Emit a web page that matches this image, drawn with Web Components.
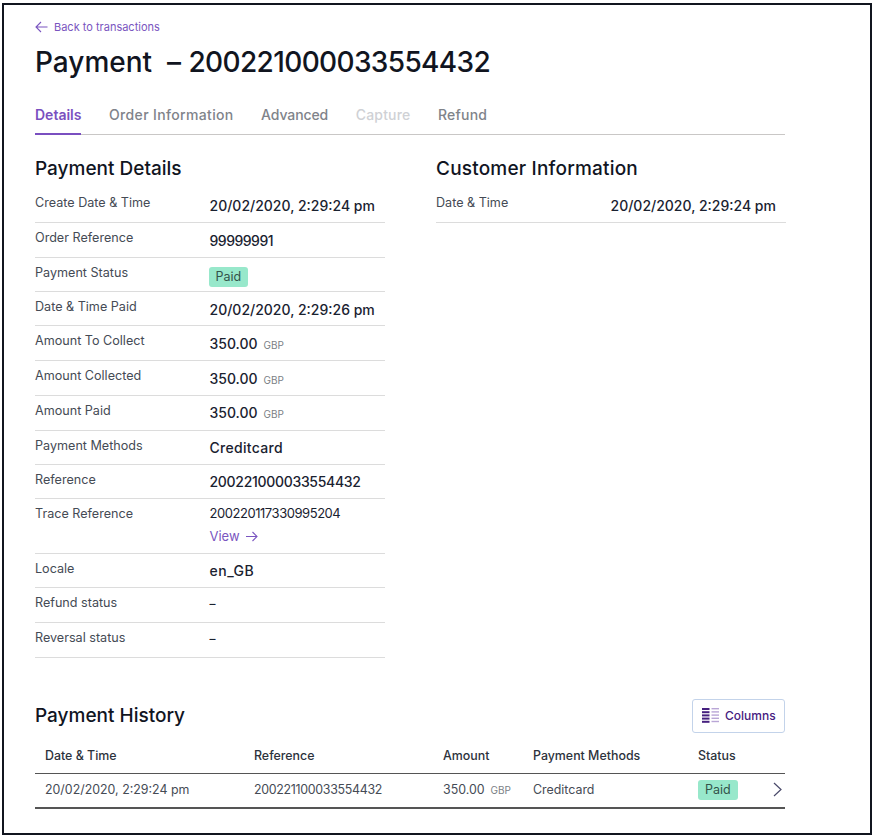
<!DOCTYPE html>
<html lang="en">
<head>
<meta charset="utf-8">
<title>Payment</title>
<style>
  html, body { margin: 0; background: #fff; }
  body { font-family: "Inter", "Liberation Sans", sans-serif; color: #1a2230; }
  .dash { font-size: 12px; line-height: 0; vertical-align: 3px; }
</style>
</head>
<body>

<payment-page>
  <back-link slot="top">Back to transactions</back-link>
  <page-title slot="top">Payment&nbsp; – <span style="letter-spacing:-.64px">200221000033554432</span></page-title>
  <tab-bar slot="top">
    <tab-item active>Details</tab-item>
    <tab-item style="letter-spacing:.35px">Order Information</tab-item>
    <tab-item style="letter-spacing:-.1px">Advanced</tab-item>
    <tab-item disabled style="letter-spacing:.2px">Capture</tab-item>
    <tab-item style="letter-spacing:.2px">Refund</tab-item>
  </tab-bar>

  <detail-list slot="left" heading="Payment Details">
    <detail-row label="Create Date &amp; Time" h="35">20/02/2020, 2:29:24 pm</detail-row>
    <detail-row label="Order Reference" h="35"><span style="letter-spacing:-.5px">99999991</span></detail-row>
    <detail-row label="Payment Status" h="34"><status-badge>Paid</status-badge></detail-row>
    <detail-row label="Date &amp; Time Paid" h="34">20/02/2020, 2:29:26 pm</detail-row>
    <detail-row label="Amount To Collect" h="35"><money-value>350.00</money-value></detail-row>
    <detail-row label="Amount Collected" h="35"><money-value>350.00</money-value></detail-row>
    <detail-row label="Amount Paid" h="35" tight><money-value>350.00</money-value></detail-row>
    <detail-row label="Payment Methods" h="34" tight><span style="letter-spacing:.3px">Creditcard</span></detail-row>
    <detail-row label="Reference" h="34" tight><span style="letter-spacing:-.3px">200221000033554432</span></detail-row>
    <detail-row label="Trace Reference" h="55" plain>
      <span style="letter-spacing:-.45px">200220117330995204</span>
      <view-link>View</view-link>
    </detail-row>
    <detail-row label="Locale" h="34" tight><span style="letter-spacing:.5px">en_GB</span></detail-row>
    <detail-row label="Refund status" h="35"><span class="dash">–</span></detail-row>
    <detail-row label="Reversal status" h="35"><span class="dash">–</span></detail-row>
  </detail-list>

  <detail-list slot="right" heading="Customer Information" style="--heading-spacing:.2px">
    <detail-row label="Date &amp; Time" h="35">20/02/2020, 2:29:24 pm</detail-row>
  </detail-list>

  <history-table slot="bottom"></history-table>
</payment-page>

<script>
class PaymentPage extends HTMLElement {
  constructor() {
    super();
    this.attachShadow({mode: 'open'}).innerHTML = `
      <style>
        :host {
          display: block;
          box-sizing: border-box;
          width: 870px;
          height: 832px;
          margin: 3px 0 0 2px;
          padding: 14px 85px 0 31px;
          border: 2px solid #11151f;
        }
        .columns {
          display: grid;
          grid-template-columns: 350px 350px;
          column-gap: 51px;
          margin-top: 21px;
        }
        .bottom { margin-top: 41px; }
      </style>
      <slot name="top"></slot>
      <div class="columns">
        <div><slot name="left"></slot></div>
        <div><slot name="right"></slot></div>
      </div>
      <div class="bottom"><slot name="bottom"></slot></div>`;
  }
}

class BackLink extends HTMLElement {
  constructor() {
    super();
    this.attachShadow({mode: 'open'}).innerHTML = `
      <style>
        :host {
          display: flex;
          align-items: center;
          gap: 6px;
          height: 16px;
          color: #7a55c0;
          font-size: 11px;
        }
        svg { display: block; }
      </style>
      <svg width="13" height="12" viewBox="0 0 13 12" fill="none" stroke="#7a55c0" stroke-width="1.1">
        <path d="M12.5 6H1M6 1 1 6l5 5"/>
      </svg>
      <slot></slot>`;
  }
}

class PageTitle extends HTMLElement {
  constructor() {
    super();
    this.attachShadow({mode: 'open'}).innerHTML = `
      <style>
        :host {
          display: block;
          margin-top: 7px;
          font-size: 28px;
          line-height: 40px;
          font-weight: 500;
          color: #11151f;
          white-space: nowrap;
        }
      </style>
      <slot></slot>`;
  }
}

class TabBar extends HTMLElement {
  constructor() {
    super();
    this.attachShadow({mode: 'open'}).innerHTML = `
      <style>
        :host {
          display: flex;
          gap: 27.5px;
          margin-top: 22px;
          border-bottom: 1px solid #c9c7c6;
        }
      </style>
      <slot></slot>`;
  }
}

class TabItem extends HTMLElement {
  constructor() {
    super();
    this.attachShadow({mode: 'open'}).innerHTML = `
      <style>
        :host {
          display: block;
          height: 31px;
          margin-bottom: -1px;
          font-size: 14px;
          line-height: 22px;
          font-weight: 500;
          color: #80838a;
        }
        :host([active]) { color: #7a4fc0; font-weight: 600; border-bottom: 2px solid #7a4fc0; height: 29px; }
        :host([disabled]) { color: #cfd1d5; }
      </style>
      <slot></slot>`;
  }
}

class DetailList extends HTMLElement {
  constructor() {
    super();
    this.attachShadow({mode: 'open'}).innerHTML = `
      <style>
        :host { display: block; }
        h2 {
          margin: 0 0 6px;
          font-size: 19px;
          line-height: 26px;
          font-weight: 500;
          color: #11151f;
          letter-spacing: var(--heading-spacing, 0);
        }
      </style>
      <h2></h2>
      <slot></slot>`;
    this.shadowRoot.querySelector('h2').textContent = this.getAttribute('heading');
  }
}

class DetailRow extends HTMLElement {
  constructor() {
    super();
    this.attachShadow({mode: 'open'}).innerHTML = `
      <style>
        :host {
          display: grid;
          grid-template-columns: 174.5px 1fr;
          box-sizing: border-box;
          border-bottom: 1px solid #dcdcdc;
        }
        .label {
          padding-top: 5px;
          font-size: 12.6px;
          line-height: 20px;
          color: #454b55;
        }
        .value {
          padding-top: 7.5px;
          font-size: 14px;
          line-height: 20px;
          font-weight: 500;
          color: #1a2230;
          white-space: nowrap;
        }
        :host([tight]) .value { padding-top: 6.5px; }
        :host([plain]) .value { padding-top: 4px; font-weight: 400; font-size: 13px; }
      </style>
      <div class="label"></div>
      <div class="value"><slot></slot></div>`;
    this.shadowRoot.querySelector('.label').textContent = this.getAttribute('label');
    this.style.height = this.getAttribute('h') + 'px';
  }
}

class StatusBadge extends HTMLElement {
  constructor() {
    super();
    this.attachShadow({mode: 'open'}).innerHTML = `
      <style>
        :host {
          display: inline-block;
          box-sizing: border-box;
          height: 20px;
          margin: 1px 0 0 -1px;
          padding: 0 7px;
          border-radius: 3px;
          background: #98e8cb;
          color: #33534a;
          font-size: 12.5px;
          line-height: 20px;
          font-weight: 400;
          vertical-align: top;
        }
      </style>
      <slot></slot>`;
  }
}

class MoneyValue extends HTMLElement {
  constructor() {
    super();
    this.attachShadow({mode: 'open'}).innerHTML = `
      <style>
        :host { display: inline-flex; align-items: baseline; gap: 6px; }
        span { font-size: 10px; font-weight: 400; color: #7b7f86; }
      </style>
      <slot></slot><span>GBP</span>`;
  }
}

class ViewLink extends HTMLElement {
  constructor() {
    super();
    this.attachShadow({mode: 'open'}).innerHTML = `
      <style>
        :host {
          display: flex;
          align-items: center;
          gap: 6px;
          margin-top: 3px;
          color: #7a55c0;
          font-size: 13px;
        }
      </style>
      <slot></slot>
      <svg width="12" height="11" viewBox="0 0 12 11" fill="none" stroke="#7a55c0" stroke-width="1.1">
        <path d="M0 5.5h11M6.5 1l4.5 4.5L6.5 10"/>
      </svg>`;
  }
}

class ColumnsButton extends HTMLElement {
  constructor() {
    super();
    this.attachShadow({mode: 'open'}).innerHTML = `
      <style>
        :host {
          display: flex;
          align-items: center;
          gap: 6px;
          box-sizing: border-box;
          width: 93px;
          height: 34px;
          padding: 0 0 1px 9px;
          border: 1px solid #c3d3ea;
          border-radius: 3px;
          color: #46207f;
          font-size: 12px;
          font-weight: 500;
        }
        svg { display: block; }
      </style>
      <svg width="17" height="15" viewBox="0 0 17 15">
        <g fill="#46207f">
          <rect y="0" width="7.5" height="2"/><rect y="3.2" width="7.5" height="2"/>
          <rect y="6.4" width="7.5" height="2"/><rect y="9.6" width="7.5" height="2"/>
          <rect y="12.8" width="7.5" height="2"/>
        </g>
        <g fill="#b9a6d6">
          <rect x="9.5" y="0" width="7.5" height="1.4"/><rect x="9.5" y="3.2" width="7.5" height="1.4"/>
          <rect x="9.5" y="6.4" width="7.5" height="1.4"/><rect x="9.5" y="9.6" width="7.5" height="1.4"/>
          <rect x="9.5" y="12.8" width="7.5" height="1.4"/>
        </g>
      </svg>
      <slot></slot>`;
  }
}

class HistoryTable extends HTMLElement {
  constructor() {
    super();
    this.attachShadow({mode: 'open'}).innerHTML = `
      <style>
        :host { display: block; }
        .head { display: flex; justify-content: space-between; align-items: center; height: 34px; }
        h2 { margin: 0 0 2px; font-size: 19px; font-weight: 500; color: #11151f; }
        .row {
          display: grid;
          grid-template-columns: 209px 189px 90px 165px 1fr auto;
          align-items: center;
          padding: 0 3px 0 10px;
          font-size: 12.4px;
          color: #454b55;
        }
        .titles { height: 36px; margin-top: 5px; padding-bottom: 1px; box-sizing: border-box; font-weight: 500; color: #2c323c; border-bottom: 1px solid #555; }
        .data { height: 35px; padding-bottom: 2px; border-bottom: 2px solid #555; box-sizing: border-box; }
        .gbp { margin-left: 6px; font-size: 10px; color: #7b7f86; }
        .num { letter-spacing: -.3px; }
        status-badge { margin: 0; }
        svg { display: block; }
      </style>
      <div class="head">
        <h2>Payment History</h2>
        <columns-button>Columns</columns-button>
      </div>
      <div class="row titles">
        <div>Date &amp; Time</div><div>Reference</div><div>Amount</div><div>Payment Methods</div><div>Status</div><div></div>
      </div>
      <div class="row data">
        <div>20/02/2020, 2:29:24 pm</div>
        <div class="num">200221100033554432</div>
        <div>350.00<span class="gbp">GBP</span></div>
        <div>Creditcard</div>
        <div><status-badge>Paid</status-badge></div>
        <svg width="9" height="15" viewBox="0 0 9 15" fill="none" stroke="#4a4a6a" stroke-width="1.2"><path d="M1 1l7 6.5L1 14"/></svg>
      </div>`;
  }
}

customElements.define('payment-page', PaymentPage);
customElements.define('back-link', BackLink);
customElements.define('page-title', PageTitle);
customElements.define('tab-bar', TabBar);
customElements.define('tab-item', TabItem);
customElements.define('detail-list', DetailList);
customElements.define('detail-row', DetailRow);
customElements.define('status-badge', StatusBadge);
customElements.define('money-value', MoneyValue);
customElements.define('view-link', ViewLink);
customElements.define('columns-button', ColumnsButton);
customElements.define('history-table', HistoryTable);
</script>
</body>
</html>
